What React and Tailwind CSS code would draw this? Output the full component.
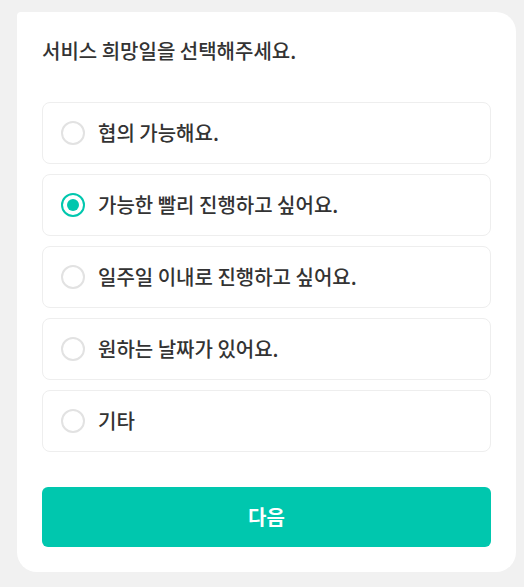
import React, { useState } from "react";

const options = [
  "협의 가능해요.",
  "가능한 빨리 진행하고 싶어요.",
  "일주일 이내로 진행하고 싶어요.",
  "원하는 날짜가 있어요.",
  "기타",
];

export default function App() {
  const [selected, setSelected] = useState(1);
  return (
    <div
      className="min-h-[587px] w-full bg-[#f1f1f1] pt-[12px] pl-[17px]"
      style={{ fontFamily: '"Noto Sans CJK KR", "Noto Sans", sans-serif' }}
    >
      <div className="w-[499px] h-[560px] bg-white rounded-[20px] rounded-tl-[4px] px-[25px] pt-[25px] pb-[25px] flex flex-col">
        <h1 className="text-[20px] leading-[28px] font-medium text-[#333]">
          서비스 희망일을 선택해주세요.
        </h1>
        <div className="mt-[37px] flex flex-col gap-[10px]">
          {options.map((o, i) => (
            <button
              key={o}
              onClick={() => setSelected(i)}
              className="h-[62px] w-full border border-[#eeeeee] rounded-[8px] flex items-center pl-[18px] text-left"
            >
              {selected === i ? (
                <span className="w-[24px] h-[24px] rounded-full border-2 border-[#00c7ae] flex items-center justify-center">
                  <span className="w-[12px] h-[12px] rounded-full bg-[#00c7ae]" />
                </span>
              ) : (
                <span className="w-[24px] h-[24px] rounded-full border-2 border-[#e2e2e2]" />
              )}
              <span className="ml-[13px] text-[20px] leading-[28px] font-medium text-[#333]">
                {o}
              </span>
            </button>
          ))}
        </div>
        <button className="mt-[35px] h-[60px] w-full rounded-[6px] bg-[#00c7ae] text-white text-[20px] font-bold">
          다음
        </button>
      </div>
    </div>
  );
}
